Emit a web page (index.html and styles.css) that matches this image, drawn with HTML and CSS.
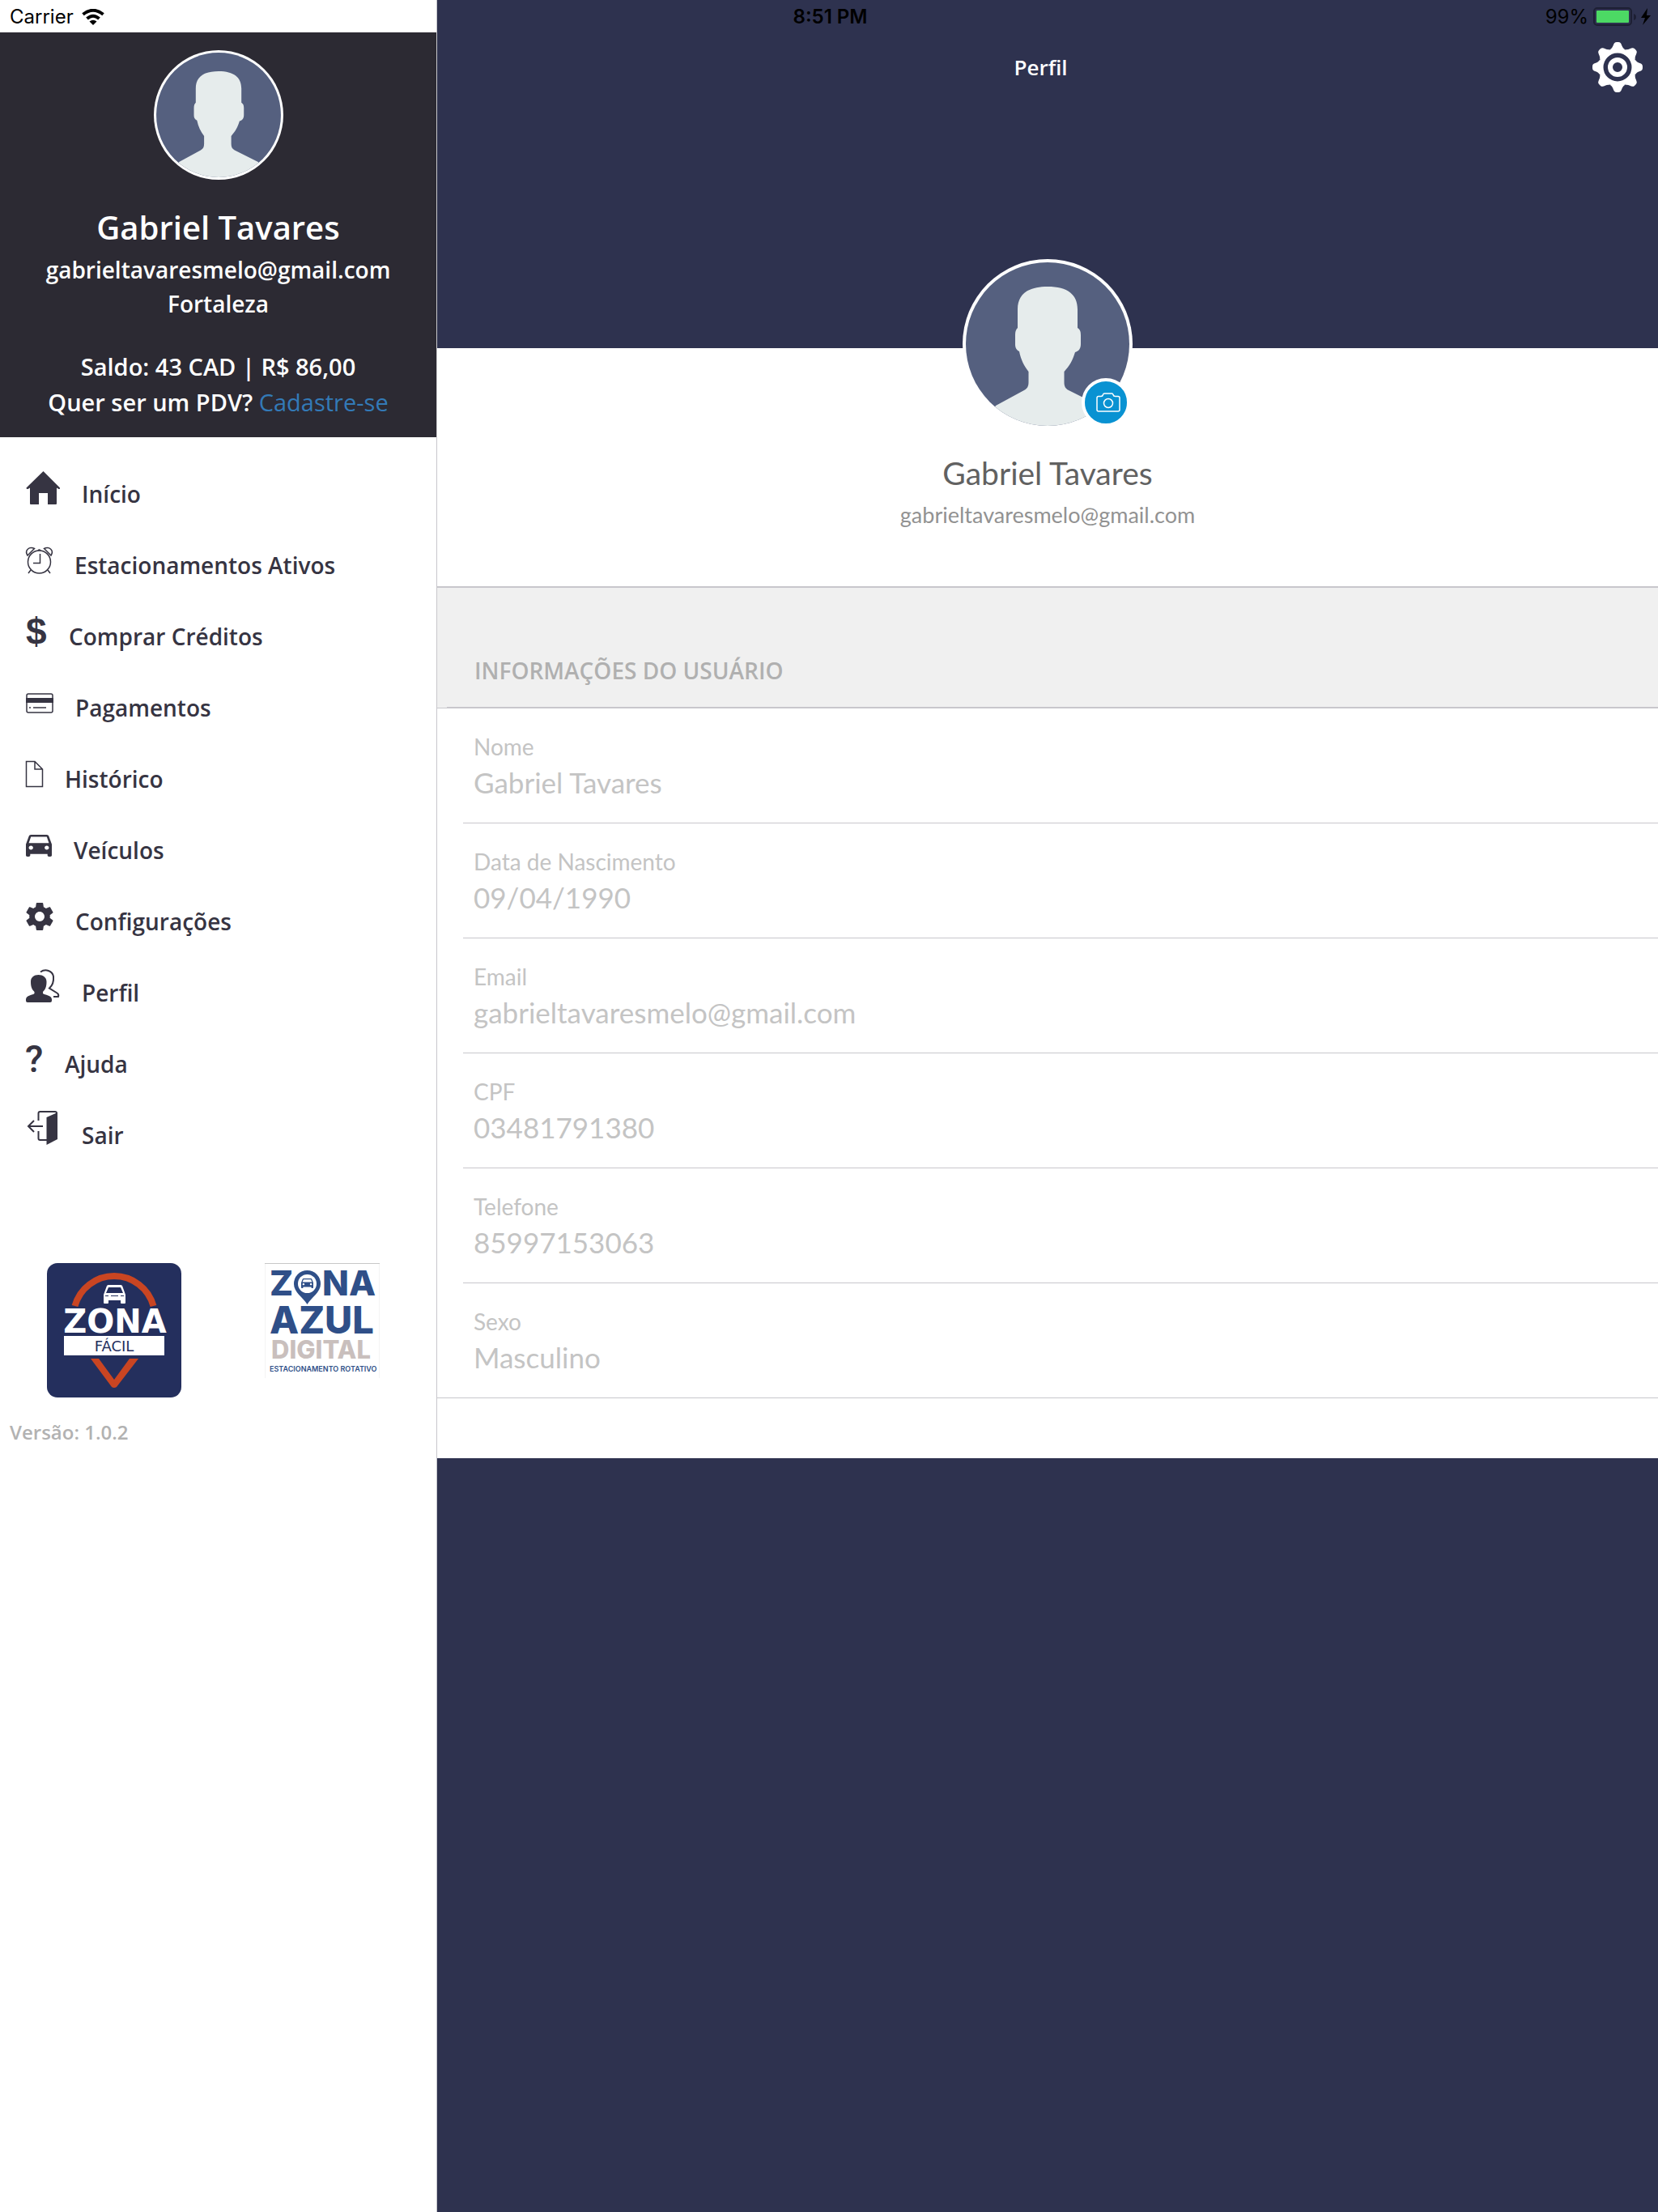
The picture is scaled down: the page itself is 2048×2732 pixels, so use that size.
FILE: index.html
```html
<!DOCTYPE html>
<html lang="pt-BR">
<head>
<meta charset="utf-8">
<meta name="viewport" content="width=device-width, initial-scale=1">
<title>Perfil</title>
<link rel="stylesheet" href="styles.css">
</head>
<body>
<svg class="defs" aria-hidden="true">
  <symbol id="person" viewBox="0 0 210 210">
    <circle cx="105" cy="105" r="105" fill="#fff"/>
    <circle cx="105" cy="105" r="101" fill="#55607f"/>
    <clipPath id="disc"><circle cx="105" cy="105" r="101"/></clipPath>
    <path clip-path="url(#disc)" fill="#e6ecec" d="M105 34C130 34 142 44 142 62V85C145 87 146 89 146 94V105C146 111 143 114 139 115C136 125 132 132 125.500 139V152C125.500 157 127 160 131 162L169 181L190 210H20L41 181L76 162C80 160 81.500 157 81.500 152V139C76 132 72 124 70 114C66 112 65 109 65 105V94C65 89 66 87 68 85V62C68 44 80 34 105 34Z"/>
  </symbol>
  <symbol id="car" viewBox="3 5 18 16" preserveAspectRatio="none">
    <path d="M18.920 6.010C18.720 5.420 18.160 5 17.500 5h-11c-.66 0-1.210.42-1.420 1.010L3 12v8c0 .55.45 1 1 1h1c.55 0 1-.45 1-1v-1h12v1c0 .55.45 1 1 1h1c.55 0 1-.45 1-1v-8l-2.080-5.990zM6.500 16c-.83 0-1.500-.67-1.500-1.500S5.670 13 6.500 13s1.500.67 1.500 1.500S7.330 16 6.500 16zm11 0c-.83 0-1.500-.67-1.500-1.500s.67-1.500 1.500-1.500 1.500.67 1.500 1.500-.67 1.500-1.500 1.500zM5 11l1.500-4.500h11L19 11H5z"/>
  </symbol>
</svg>

<div class="status">
  <div class="status-left">
    <span>Carrier</span>
    <svg width="28" height="20" viewBox="0 0 28 20" aria-label="Wi-Fi"><path d="M14 20 9.500 15.500Q14 12 18.500 15.500Z"/><path d="M6.500 12Q14 5.500 21.500 12M1.500 6.800Q14-3.200 26.500 6.800" fill="none" stroke="#000" stroke-width="4"/></svg>
  </div>
  <time class="status-time">8:51 PM</time>
  <div class="status-right">
    <span>99%</span>
    <svg width="71" height="24" viewBox="0 0 71 24" aria-label="Bateria carregando"><rect x="1" y="1" width="46" height="21" rx="4" fill="none" stroke="#1d1f33" stroke-width="2"/><rect x="4" y="4" width="40" height="15" rx="1" fill="#4cd964"/><path d="M50 8q3 1 3 4t-3 4z" fill="#1d1f33"/><path d="M67 1 59 13h5l-3 9 10-12h-5z"/></svg>
  </div>
</div>

<aside class="sidebar">
  <header class="account">
    <svg class="account-photo" aria-label="Foto do perfil"><use href="#person"/></svg>
    <h2 class="account-name">Gabriel Tavares</h2>
    <p class="account-line">gabrieltavaresmelo@gmail.com</p>
    <p class="account-line">Fortaleza</p>
    <p class="account-balance">Saldo: 43 CAD | R$ 86,00</p>
    <p class="account-offer">Quer ser um PDV? <a href="#cadastro">Cadastre-se</a></p>
  </header>

  <nav class="menu">
    <a href="#inicio"><svg width="42" height="38"><path d="M21.500 0 .5 20.500q0 2 2 1.500L5 20.500V40q0 1 1 1H16V27H27V41H37q1 0 1-1V20.500L40.500 22q2 .5 1.500-1.500z"/></svg>Início</a>
    <a href="#ativos"><svg class="line" width="33" height="32"><circle cx="16.500" cy="18" r="14"/><path d="M17.500 8V19.500H9M2 10C-2 3.500 4-1.500 10.500 1.500ZM31 10C35 3.500 29-1.500 22.500 1.500ZM15 4q1.500-2 3 0M6 28 3 32M27 28 30 32"/></svg>Estacionamentos Ativos</a>
    <a href="#creditos"><svg width="26" height="34"><text class="dollar" x="0" y="34">$</text></svg>Comprar Créditos</a>
    <a href="#pagamentos"><svg class="line" width="34" height="28"><rect x="1" y="1" width="32" height="23" rx="2"/><path d="M4 18h2M9 18h16"/><path d="M0 9H34" stroke-width="6"/></svg>Pagamentos</a>
    <a href="#historico"><svg class="line" width="21" height="32"><path d="M.5 .5H11L20.500 10V31.500H.5ZM11 .5V10H20.500"/></svg>Histórico</a>
    <a href="#veiculos"><svg width="32" height="29"><use href="#car" width="32" height="27"/></svg>Veículos</a>
    <a href="#configuracoes"><svg width="34" height="33"><svg width="34" height="34" viewBox="2 2 20 20"><path d="M19.430 12.980c.04-.32.07-.64.07-.98s-.03-.66-.07-.98l2.110-1.650c.19-.15.24-.42.12-.64l-2-3.460c-.12-.22-.39-.3-.61-.22l-2.490 1c-.52-.4-1.080-.73-1.690-.98l-.38-2.650C14.460 2.180 14.250 2 14 2h-4c-.25 0-.46.18-.49.42l-.38 2.650c-.61.25-1.170.59-1.690.98l-2.490-1c-.23-.09-.49 0-.61.22l-2 3.460c-.13.22-.07.49.12.64l2.110 1.650c-.04.32-.07.65-.07.98s.03.66.07.98l-2.110 1.650c-.19.15-.24.42-.12.64l2 3.460c.12.22.39.3.61.22l2.490-1c.52.4 1.080.73 1.690.98l.38 2.650c.03.24.24.42.49.42h4c.25 0 .46-.18.49-.42l.38-2.650c.61-.25 1.170-.59 1.690-.98l2.490 1c.23.09.49 0 .61-.22l2-3.460c.12-.22.07-.49-.12-.64l-2.110-1.650zM12 15.500c-1.930 0-3.500-1.570-3.500-3.500s1.570-3.500 3.500-3.500 3.500 1.570 3.500 3.500-1.570 3.500-3.500 3.500z"/></svg></svg>Configurações</a>
    <a href="#perfil"><svg width="42" height="39"><path d="M15.500 7C21 7 25.500 10 25.500 15.500C25.500 22 24 25 21 28V30C23 32 32 32 32 37.500V39q0 2-2 2H2Q0 41 0 39V37.500C0 32 9 32 10.500 30V28C7.500 25 6 22 6 15.500C6 10 10 7 15.500 7Z"/><path d="M18 3.500C24-1 33 2 34 9C34.500 15 33 20 29 23.500L38.500 29.500Q41 31 40 34H34" fill="none" stroke="#363442" stroke-width="2"/></svg>Perfil</a>
    <a href="#ajuda"><svg width="21" height="32"><text class="question" x="-1" y="32">?</text></svg>Ajuda</a>
    <a href="#sair"><svg width="42" height="40"><path d="M25.500 8 39 2V35L25.500 42Z"/><path d="M15.500 12V3q0-2 2-2H36q2 0 2 2M15.500 25V34q0 2 2 2H26M3 19H21M10 12 3 19 10 26" fill="none" stroke="#363442" stroke-width="2"/></svg>Sair</a>
  </nav>

  <div class="brands">
    <svg width="166" height="166" viewBox="0 0 166 166" role="img" aria-label="Zona Fácil">
      <rect width="166" height="166" rx="13" fill="#242f5d"/>
      <path d="M34.500 53A50.300 50.300 0 0 1 131.500 53" fill="none" stroke="#c94522" stroke-width="8"/>
      <path d="M74 28q1-1 2-1H91q1 0 2 1L97 39V49q0 1-1 1H92q-1 0-1-1V46H76v3q0 1-1 1H71q-1 0-1-1V39ZM76 30 73 37H94L91 30ZM72 40v1h4v-1ZM79 40v1h9v-1ZM91 40v1h4v-1Z" fill="#fff" fill-rule="evenodd"/>
      <text class="facil-zona" x="84" y="86">ZONA</text>
      <rect x="21" y="90" width="124" height="24" fill="#fff"/>
      <text class="facil-word" x="83" y="109">FÁCIL</text>
      <path d="M54 118H64L83 144 102 118H113L86 153Q83 155 80 153Z" fill="#c94522"/>
    </svg>
    <svg width="142" height="142" viewBox="0 0 142 142" role="img" aria-label="Zona Azul Digital">
      <path d="M0 .5H142" stroke="#c8c8c8"/>
      <path d="M.5 1V142M141.500 1V142" stroke="#f4f4f4"/>
      <g class="azul">
        <text x="6" y="40" font-size="43">Z</text>
        <path d="M52.500 9A16.500 16.500 0 0 1 69 26C69 36 58 42 52.500 51C47 42 36 36 36 26A16.500 16.500 0 0 1 52.500 9Z"/>
        <circle cx="52.500" cy="25.500" r="11.500" fill="#fff"/>
        <use href="#car" x="45" y="19" width="15" height="12"/>
        <text x="71" y="40" font-size="43">NA</text>
        <text x="6" y="87" font-size="47">AZUL</text>
        <text class="digital" x="8" y="118" font-size="31">DIGITAL</text>
        <text class="tagline" x="6" y="134" font-size="9">ESTACIONAMENTO ROTATIVO</text>
      </g>
    </svg>
  </div>
  <p class="version">Versão: 1.0.2</p>
</aside>

<main class="main">
  <header class="topbar">
    <h1>Perfil</h1>
    <button class="settings" type="button" aria-label="Ajustes">
      <svg width="62" height="62" viewBox="-31 -31 62 62" fill="#fff">
        <defs><path id="tooth" d="M-9-22C-4-25-6-31-1-31H1C6-31 4-25 9-22Z"/></defs>
        <circle r="20.500" fill="none" stroke="#fff" stroke-width="6"/>
        <use href="#tooth"/><use href="#tooth" transform="rotate(45)"/><use href="#tooth" transform="rotate(90)"/><use href="#tooth" transform="rotate(135)"/><use href="#tooth" transform="rotate(180)"/><use href="#tooth" transform="rotate(225)"/><use href="#tooth" transform="rotate(270)"/><use href="#tooth" transform="rotate(315)"/>
        <circle r="9" fill="none" stroke="#fff" stroke-width="6"/>
      </svg>
    </button>
  </header>

  <div class="sheet">
    <section class="profile">
      <div class="photo">
        <svg class="photo-image" aria-label="Foto do perfil"><use href="#person"/></svg>
        <button class="camera" type="button" aria-label="Trocar foto">
          <svg width="30" height="24" viewBox="0 0 30 24" fill="none" stroke="#fff" stroke-width="1.500"><path d="M3 4.500H6Q8 4.500 8.500 2.500Q9 1 10 1H19.500Q20.500 1 21 2.500Q21.500 4.500 23.500 4.500H27Q29 4.500 29 6.500V21Q29 23 27 23H3Q1 23 1 21V6.500Q1 4.500 3 4.500Z"/><circle cx="15" cy="13" r="5.500"/></svg>
        </button>
      </div>
      <p class="profile-name">Gabriel Tavares</p>
      <p class="profile-email">gabrieltavaresmelo@gmail.com</p>
    </section>

    <h2 class="section-title">INFORMAÇÕES DO USUÁRIO</h2>
    <form class="fields">
      <div class="field"><label for="nome">Nome</label><input id="nome" value="Gabriel Tavares" disabled></div>
      <div class="field"><label for="nascimento">Data de Nascimento</label><input id="nascimento" value="09/04/1990" disabled></div>
      <div class="field"><label for="email">Email</label><input id="email" value="gabrieltavaresmelo@gmail.com" disabled></div>
      <div class="field"><label for="cpf">CPF</label><input id="cpf" value="03481791380" disabled></div>
      <div class="field"><label for="telefone">Telefone</label><input id="telefone" value="85997153063" disabled></div>
      <div class="field"><label for="sexo">Sexo</label><input id="sexo" value="Masculino" disabled></div>
    </form>
  </div>
</main>
</body>
</html>
```
FILE: styles.css
```css
* { box-sizing: border-box; }

body {
  position: relative;
  display: grid;
  grid-template-columns: 540px 1fr;
  min-height: 100vh;
  margin: 0;
  background: #fff;
  font-family: "Open Sans", sans-serif;
}

h1, h2, p { margin: 0; }
svg { display: block; flex: none; }
.defs { position: absolute; width: 0; height: 0; }

/* System status bar, over both columns */
.status {
  position: absolute;
  inset: 0 0 auto;
  display: grid;
  grid-template-columns: 1fr auto 1fr;
  align-items: center;
  padding: 1px 9px 0 12px;
  font: 24px/40px "Inter", sans-serif;
  color: #000;
}
.status-left, .status-right { display: flex; align-items: center; gap: 6px; }
.status-left { gap: 10px; }
.status-right { justify-content: flex-end; }
.status-time { font-weight: 600; }

/* Sidebar */
.sidebar {
  padding-top: 40px;
  border-right: 1px solid #c8c7cc;
}
.account {
  display: flex;
  flex-direction: column;
  align-items: center;
  padding: 22px 0 21px;
  background: #2c2a33;
  color: #fff;
  font-weight: 600;
  text-align: center;
}
.account-photo { width: 160px; height: 160px; }
.account-name {
  margin: 32px 0 4px;
  font-size: 40px;
  font-weight: 600;
  line-height: 54px;
}
.account-line { font-size: 28px; line-height: 42px; }
.account-balance { margin-top: 35px; font-size: 29px; line-height: 44px; }
.account-offer { font-size: 29px; line-height: 44px; }
.account-offer a { color: #337ab7; font-weight: 400; text-decoration: none; }

.menu { display: flex; flex-direction: column; }
.menu a {
  display: flex;
  align-items: flex-end;
  gap: 27px;
  height: 88px;
  padding-left: 32px;
  color: #363442;
  font-size: 28px;
  font-weight: 600;
  line-height: 35px;
  text-decoration: none;
}
.menu svg { margin-bottom: 8px; overflow: visible; fill: #363442; }
.menu .line { fill: none; stroke: #363442; stroke-width: 1.5; }
.dollar { font: 700 46px "Liberation Sans", sans-serif; }
.question { font: 500 46px "Roboto", sans-serif; }

.brands {
  display: flex;
  align-items: flex-start;
  gap: 103px;
  margin-top: 140px;
  padding-left: 58px;
}
.facil-zona { font: 700 40px "DejaVu Sans", sans-serif; fill: #fff; text-anchor: middle; }
.facil-word { font: 400 18px "DejaVu Sans", sans-serif; fill: #242f5d; text-anchor: middle; }
.azul { fill: #2f4f88; font-family: "Inter", sans-serif; font-weight: 800; }
.digital { fill: #c9bfbd; }
.tagline { font-weight: 600; }

.version {
  margin-top: 27px;
  padding-left: 12px;
  color: #b2b2b2;
  font-size: 24px;
  font-weight: 600;
  line-height: 32px;
}

/* Main column */
.main { background: #2e324f; }
.topbar {
  display: grid;
  grid-template-columns: 64px 1fr 64px;
  align-items: start;
  height: 430px;
  padding: 52px 17px 0 0;
}
.topbar h1 {
  grid-column: 2;
  color: #fff;
  font-size: 26px;
  font-weight: 600;
  line-height: 62px;
  text-align: center;
}
button { padding: 0; border: 0; background: none; cursor: pointer; }

.sheet { padding-bottom: 74px; background: #fff; }
.profile {
  display: flex;
  flex-direction: column;
  align-items: center;
  padding-bottom: 70px;
  font-family: "Lato", sans-serif;
}
.photo { position: relative; margin-top: -110px; }
.photo-image { width: 210px; height: 210px; }
.camera {
  position: absolute;
  right: 3px;
  bottom: 3px;
  display: grid;
  place-items: center;
  width: 60px;
  height: 60px;
  padding-left: 6px;
  border: 4px solid #fff;
  border-radius: 50%;
  background: #0992d2;
}
.profile-name {
  margin: 30px 0 10px;
  color: #616161;
  font-size: 39px;
  line-height: 48px;
}
.profile-email { color: #929292; font-size: 27px; line-height: 36px; }

.section-title {
  padding: 82px 0 0 46px;
  border-top: 2px solid #c8c7cc;
  border-bottom: 1px solid #c8c7cc;
  background: #f0f0f0;
  color: #b0b0b0;
  font-size: 28px;
  font-weight: 600;
  line-height: 40px;
}
.section-title::after {
  content: "";
  display: block;
  height: 1px;
  margin: 25px 0 0 -34px;
  background: #c8c7cc;
}

.fields {
  padding-left: 32px;
  border-bottom: 1px solid #c8c7cc;
  color: #c4c4c4;
  font-family: "Lato", sans-serif;
}
.field {
  display: flex;
  flex-direction: column;
  gap: 1px;
  padding: 27px 13px;
  border-bottom: 1px solid #c8c7cc;
}
.field:last-child { border-bottom: 0; }
.field label { font-size: 28px; line-height: 40px; }
.field input {
  width: 100%;
  height: 46px;
  padding: 0;
  border: 0;
  background: none;
  color: inherit;
  font: 35px/46px "Lato", sans-serif;
}
```
